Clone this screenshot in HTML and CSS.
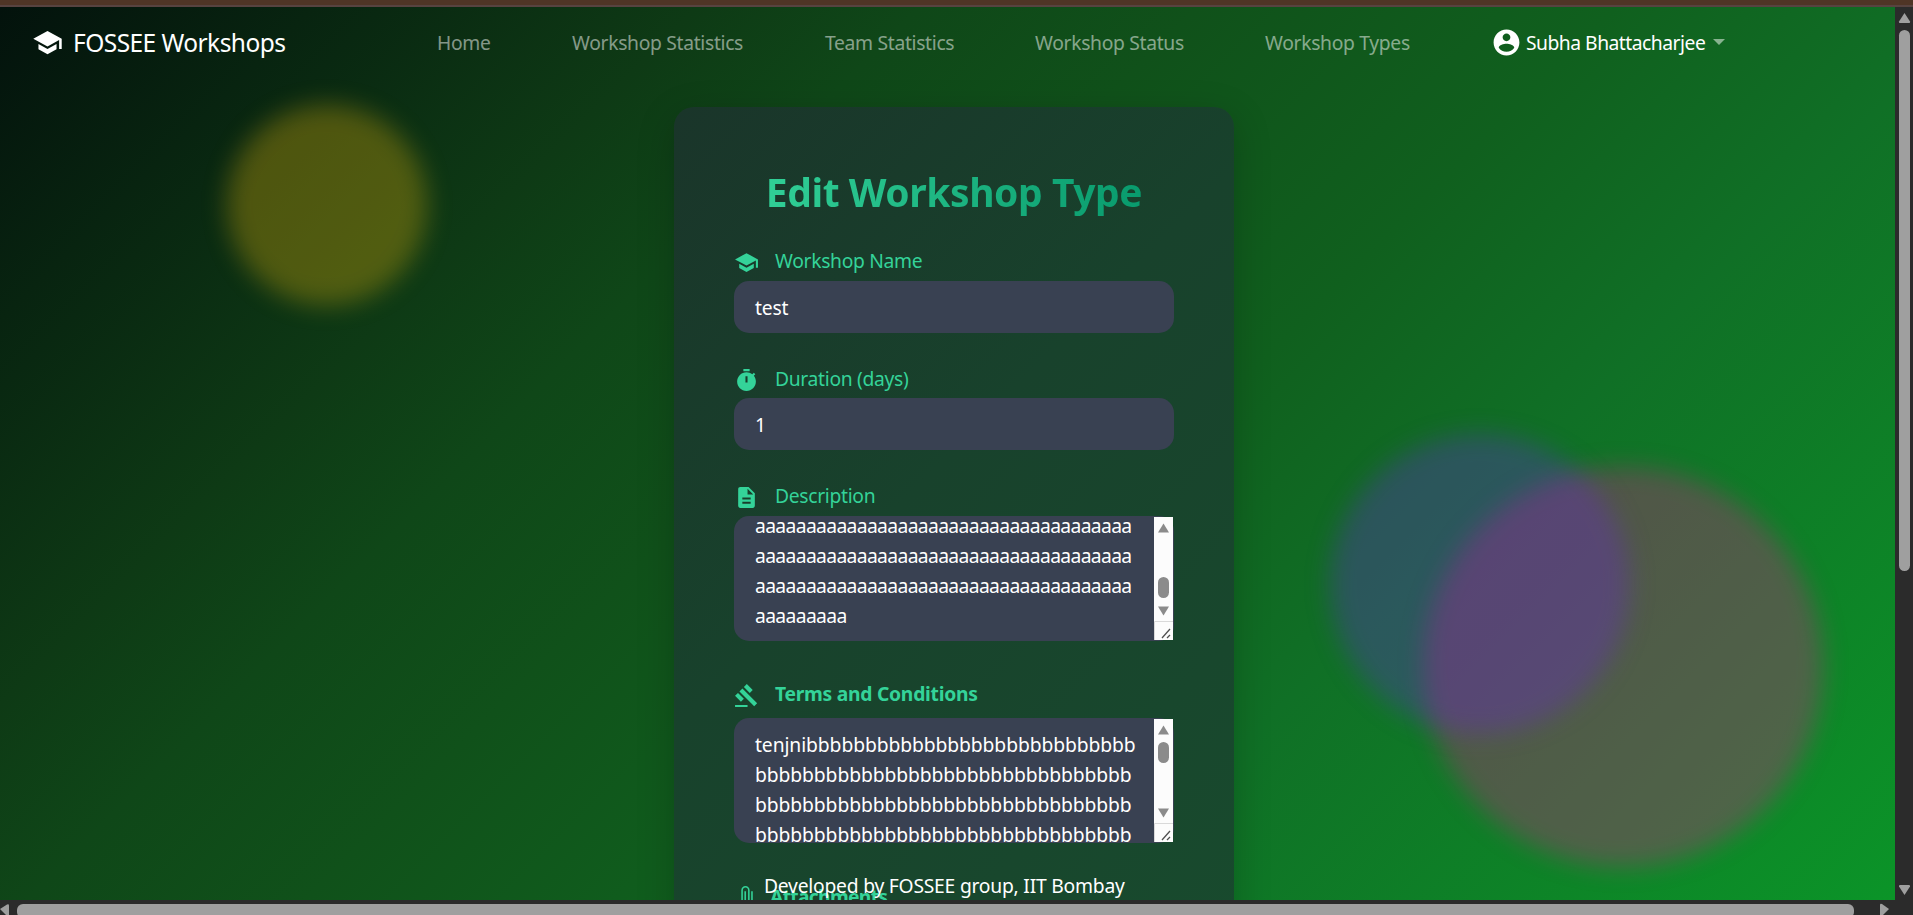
FILE: index.html
```html
<!DOCTYPE html>
<html lang="en">
<head>
<meta charset="utf-8">
<title>FOSSEE Workshops</title>
<link rel="stylesheet" href="styles.css">
</head>
<body>
<div class="topline"></div>
<div class="main">
  <div class="viewport">
    <div class="blob yellow"></div>
    <div class="blob pink"></div>
    <div class="blob violet"></div>
    <nav class="navbar">
      <a class="brand"><svg class="brand-icon" viewBox="0 0 24 24"><path d="M5 13.18v4L12 21l7-3.82v-4L12 17l-7-3.82zM12 3L1 9l11 6 9-4.91V17h2V9L12 3z"/></svg><span>FOSSEE Workshops</span></a>
      <div class="links">
        <a class="l1">Home</a><a class="l2">Workshop Statistics</a><a class="l3">Team Statistics</a><a class="l4">Workshop Status</a><a class="l5">Workshop Types</a>
      </div>
      <a class="user"><svg class="user-icon" viewBox="0 0 24 24"><path d="M12 2C6.48 2 2 6.48 2 12s4.48 10 10 10 10-4.48 10-10S17.52 2 12 2zm0 3c1.66 0 3 1.34 3 3s-1.34 3-3 3-3-1.34-3-3 1.34-3 3-3zm0 14.2c-2.5 0-4.71-1.28-6-3.22.03-1.99 4-3.08 6-3.08 1.99 0 5.97 1.09 6 3.08-1.29 1.94-3.5 3.22-6 3.22z"/></svg><span>Subha Bhattacharjee</span><i class="caret"></i></a>
    </nav>
    <section class="card">
      <h1><span>Edit Workshop Type</span></h1>
      <div class="field f1">
        <div class="label"><svg viewBox="0 0 24 24"><path d="M5 13.18v4L12 21l7-3.82v-4L12 17l-7-3.82zM12 3L1 9l11 6 9-4.91V17h2V9L12 3z"/></svg><span>Workshop Name</span></div>
        <div class="input"><span>test</span></div>
      </div>
      <div class="field f2">
        <div class="label"><svg viewBox="0 0 24 24"><path fill-rule="evenodd" d="M15 1H9v2h6V1zM19.03 7.39l1.42-1.42c-.43-.51-.9-.99-1.41-1.41l-1.42 1.42C16.07 4.74 14.12 4 12 4c-4.97 0-9 4.03-9 9s4.02 9 9 9 9-4.03 9-9c0-2.12-.74-4.07-1.97-5.61zM11 14h2V8h-2v6z"/></svg><span>Duration (days)</span></div>
        <div class="input"><span>1</span></div>
      </div>
      <div class="field f3">
        <div class="label"><svg viewBox="0 0 24 24"><path d="M14 2H6c-1.1 0-1.99.9-1.99 2L4 20c0 1.1.89 2 1.99 2H18c1.1 0 2-.9 2-2V8l-6-6zm2 16H8v-2h8v2zm0-4H8v-2h8v2zm-3-5V3.5L18.5 9H13z"/></svg><span>Description</span></div>
        <div class="area">
          <div class="text rows-a"><p>aaaaaaaaaaaaaaaaaaaaaaaaaaaaaaaaaaaaa</p><p>aaaaaaaaaaaaaaaaaaaaaaaaaaaaaaaaaaaaa</p><p>aaaaaaaaaaaaaaaaaaaaaaaaaaaaaaaaaaaaa</p><p>aaaaaaaaa</p></div>
          <svg class="bar" viewBox="0 0 19 123"><path class="track" d="M0 0h19v123H0z"/><path class="knob" d="M9.500 6.500L15 15.500H4z"/><rect class="knob" x="4" y="60" width="11" height="21" rx="5.500"/><path class="knob" d="M9.500 98.500L15 89.500H4z"/><path class="edge" d="M.5 123v-18.500H19"/><path class="grip" d="M8 121l8-9M13 121l3-3"/></svg>
        </div>
      </div>
      <div class="field f4">
        <div class="label bold"><svg viewBox="0 0 24 24"><path d="M1 21h12v2H1zM5.245 8.070l2.830-2.827 14.140 14.142-2.828 2.828zM12.317 1l5.657 5.656-2.830 2.830-5.654-5.660zM3.825 9.485l5.657 5.657-2.828 2.828-5.657-5.657z"/></svg><span>Terms and Conditions</span></div>
        <div class="area">
          <div class="text rows-b"><p>tenjnibbbbbbbbbbbbbbbbbbbbbbbbbbbb</p><p>bbbbbbbbbbbbbbbbbbbbbbbbbbbbbbbb</p><p>bbbbbbbbbbbbbbbbbbbbbbbbbbbbbbbb</p><p>bbbbbbbbbbbbbbbbbbbbbbbbbbbbbbbb</p></div>
          <svg class="bar" viewBox="0 0 19 123"><path class="track" d="M0 0h19v123H0z"/><path class="knob" d="M9.500 6.500L15 15.500H4z"/><rect class="knob" x="4" y="23" width="11" height="21" rx="5.500"/><path class="knob" d="M9.500 98.500L15 89.500H4z"/><path class="edge" d="M.5 123v-18.500H19"/><path class="grip" d="M8 121l8-9M13 121l3-3"/></svg>
        </div>
      </div>
      <div class="label bold attach"><svg viewBox="0 0 24 24"><path d="M16.500 6v11.500c0 2.210-1.790 4-4 4s-4-1.790-4-4V5c0-1.380 1.120-2.500 2.500-2.500s2.500 1.120 2.500 2.500v10.500c0 .55-.45 1-1 1s-1-.45-1-1V6H10v9.500c0 1.380 1.120 2.500 2.500 2.500s2.500-1.120 2.500-2.500V5c0-2.210-1.790-4-4-4S7 2.790 7 5v12.500c0 3.040 2.460 5.500 5.500 5.500s5.500-2.460 5.500-5.500V6h-1.500z"/></svg><span>Attachments</span></div>
    </section>
    <footer class="footer"><span>Developed by FOSSEE group, IIT Bombay</span></footer>
  </div>
  <div class="vscroll">
    <svg viewBox="0 0 18 893"><path d="M9.500 6L15 14.500q.5 1.500-1 1.500H5q-1.500 0-1-1.500z"/><rect x="4" y="23" width="11" height="541" rx="5.500"/><path d="M9.500 888L15 879.500q.5-1.500-1-1.500H5q-1.500 0-1 1.500z"/></svg>
  </div>
</div>
<div class="hscroll">
  <svg viewBox="0 0 1913 15"><path d="M0 9L7 4.500q2-1 2 1V15H6z"/><rect x="17" y="4" width="1837" height="14" rx="6"/><path d="M1880 15V5q0-2 2-1l7 5-6 6z"/></svg>
</div>
</body>
</html>
```
FILE: styles.css
```css
* { box-sizing: border-box; }
body { margin: 0; height: 915px; overflow: hidden; display: flex; flex-direction: column; font-family: "Noto Sans", sans-serif; font-size: 19.3px; color: #fff; background: #2b2b2b; }
.topline { height: 7px; flex: none; background: #4f3526; border-bottom: 2px solid #574340; }
.main { height: 893px; flex: none; display: flex; }
.viewport { position: relative; width: 1895px; height: 893px; flex: none; overflow: hidden; background: linear-gradient(135deg, #03120c 0%, #0e3a15 25%, #0f4718 33%, #10511a 43%, #10601e 58%, #107026 71%, #0b9428 100%); }
.vscroll { width: 18px; background: #2b2b2b; fill: #9f9f9f; }
.vscroll svg, .hscroll svg { display: block; width: 100%; height: 100%; }
.hscroll { height: 15px; flex: none; overflow: hidden; background: #2b2b2b; fill: #9f9f9f; }

/* Blurred background discs */
.blob { position: absolute; border-radius: 50%; filter: blur(12.5px); }
.yellow { left: 227px; top: 98px; width: 200px; height: 200px; background: rgba(240, 185, 10, .3); }
.violet { left: 1330px; top: 427px; width: 300px; height: 300px; background: rgba(105, 33, 220, .3); }
.pink { left: 1423px; top: 460px; width: 400px; height: 400px; background: rgba(232, 15, 150, .3); }

.navbar { position: relative; height: 70px; display: flex; align-items: center; padding-left: 32px; white-space: nowrap; }
.brand { display: flex; align-items: center; width: 405px; font-size: 24.500px; letter-spacing: -.55px; }
.brand-icon { width: 31px; height: 31px; margin-right: 10px; fill: #fff; }
.links { display: flex; width: 1055px; color: rgba(255, 255, 255, .5); }
.links a { letter-spacing: -.32px; }
.l1 { width: 135px; }
.l2 { width: 253px; }
.l3 { width: 210px; }
.l4 { width: 230px; }
.user { display: flex; align-items: center; letter-spacing: -.5px; margin-left: -1px; }
.user-icon { width: 31px; height: 31px; margin-right: 4px; fill: #fff; }
.caret { margin-left: 8px; border: 6px solid transparent; border-top-color: rgba(255, 255, 255, .5); border-bottom: 0; }

.card { position: relative; width: 560px; height: 1000px; margin: 30px 0 0 674px; padding: 60px 60px 0; border-radius: 20px; background: linear-gradient(135deg, #1a352a, #18422c 40%, #184c2e 100%); box-shadow: 0 10px 38px rgba(0, 0, 0, .2); }
h1 { margin: 0; height: 60px; text-align: center; font-size: 39px; line-height: 50px; letter-spacing: -.43px; white-space: nowrap; background: linear-gradient(90deg, #34d399, #059669); -webkit-background-clip: text; background-clip: text; color: transparent; }
.label { display: flex; align-items: center; height: 28px; color: #34d399; white-space: nowrap; letter-spacing: -.32px; }
.label svg { width: 25px; height: 25px; margin-right: 16px; margin-top: 4px; fill: #34d399; }
.label.bold { font-weight: 700; letter-spacing: -.27px; }
.f1 { height: 106px; padding-top: 19px; }
.f1 .label { margin-bottom: 7px; }
.f2 { height: 117px; padding-top: 31px; }
.f2 .label { margin-bottom: 6px; }
.f3 { height: 191px; padding-top: 31px; }
.f3 .label { margin-bottom: 7px; }
.f4 { height: 202px; padding-top: 38px; }
.f4 .label { margin-bottom: 11px; }
.input { height: 52px; display: flex; align-items: center; padding: 0 21px; border-radius: 15px; background: #394152; letter-spacing: -.2px; }
.area { position: relative; height: 125px; border-radius: 15px; background: #394152; }
.text { height: 124px; padding: 0 21px; line-height: 30px; white-space: nowrap; overflow: hidden; }
.text p { margin: 0; position: relative; }
.rows-a { letter-spacing: -.64px; }
.rows-a p:first-child { margin-top: -5px; }
.rows-b { padding-top: 12px; letter-spacing: -.09px; }
.bar { position: absolute; left: 420px; top: 1px; width: 19px; height: 123px; }
.track { fill: #fcfcfc; }
.knob { fill: #8b8b8b; }
.edge { fill: none; stroke: #d9d9d9; }
.grip { fill: none; stroke: #505050; stroke-width: 1.300; }
.attach { margin-top: 39px; }
.label.attach { letter-spacing: -.7px; }
.attach svg { margin-right: 11px; margin-top: 3px; }
.footer { position: absolute; left: 764px; top: 865px; line-height: 27px; white-space: nowrap; letter-spacing: -.23px; }
```
